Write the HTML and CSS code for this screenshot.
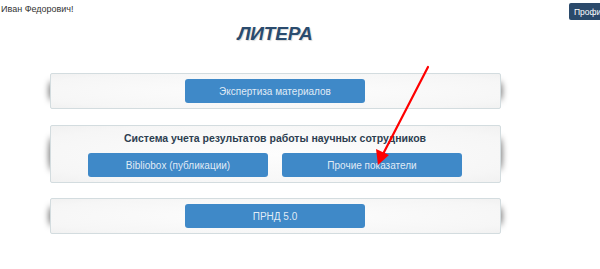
FILE: index.html
```html
<!DOCTYPE html>
<html lang="ru">
<head>
<meta charset="utf-8">
<link rel="stylesheet" href="styles.css">
</head>
<body>
<div class="topbar">
  <span class="greet">Иван Федорович!</span>
  <button class="profile">Профиль</button>
</div>
<main class="wrap">
  <h1 class="title">ЛИТЕРА</h1>
  <section class="panel">
    <div class="row"><a class="btn">Экспертиза материалов</a></div>
  </section>
  <section class="panel panel-tall">
    <h2 class="heading">Система учета результатов работы научных сотрудников</h2>
    <div class="row"><a class="btn">Bibliobox (публикации)</a><a class="btn">Прочие показатели</a></div>
  </section>
  <section class="panel">
    <div class="row"><a class="btn">ПРНД 5.0</a></div>
  </section>
</main>
<svg class="arrow" width="600" height="269" viewBox="0 0 600 269">
  <line x1="428" y1="67" x2="381" y2="158" stroke="#f00" stroke-width="2.2" stroke-linecap="round"/>
  <path d="M378 165 L376 149 L389 155 Z" fill="#f00"/>
</svg>
</body>
</html>
```
FILE: styles.css
```css
html, body { margin: 0; padding: 0; }
body {
  width: 600px; height: 269px; overflow: hidden; background: #fff;
  font-family: "Liberation Sans", Arial, sans-serif; position: relative;
}
.topbar { display: flex; justify-content: space-between; align-items: flex-start; height: 0; }
.greet { font-size: 9px; color: #333; margin: 4px 0 0 1px; }
.profile {
  margin: 3px -22px 0 0; background: #2b4a6b; color: #fff; border: 0; border-radius: 2px;
  font: 8.5px "Liberation Sans", Arial, sans-serif; padding: 4px 5px; height: 17px; width: 53px; text-align: left;
}
.wrap { width: 550px; display: flex; flex-direction: column; align-items: center; padding-top: 22px; }
.title {
  margin: 0 0 27px; font-size: 19px; font-weight: bold; font-style: italic; color: #2a4b6e;
  line-height: 24px; text-shadow: 1px 1px 1px rgba(0,0,0,0.15); letter-spacing: -0.2px;
}
.panel {
  position: relative; width: 451px; box-sizing: border-box; height: 36px; margin-bottom: 16px;
  border: 1px solid #d3dcdf; border-radius: 2px;
  background: radial-gradient(ellipse at center, #fdfdfd 0%, #f6f6f6 80%, #f1f1f1 100%);
  padding-top: 5px;
}
.panel::before, .panel::after {
  content: ""; position: absolute; top: 20%; bottom: 20%; width: 6px; z-index: -1;
  background: rgba(0,0,0,0.6); filter: blur(3px); border-radius: 50%;
}
.panel::before { left: -2px; }
.panel::after { right: -2px; }
.panel-tall { height: 58px; padding-top: 5px; margin-bottom: 15px; }
.heading { margin: 0 0 8px; text-align: center; font-size: 10.5px; font-weight: bold; color: #2d3e50; line-height: 14px; }
.row { display: flex; justify-content: center; gap: 14px; }
.btn {
  display: flex; align-items: center; justify-content: center; width: 180px; height: 24px;
  background: #3f89c8; border-radius: 3px; color: rgba(255,255,255,0.85); font-size: 10px;
}
.arrow { position: absolute; left: 0; top: 0; pointer-events: none; }
```
